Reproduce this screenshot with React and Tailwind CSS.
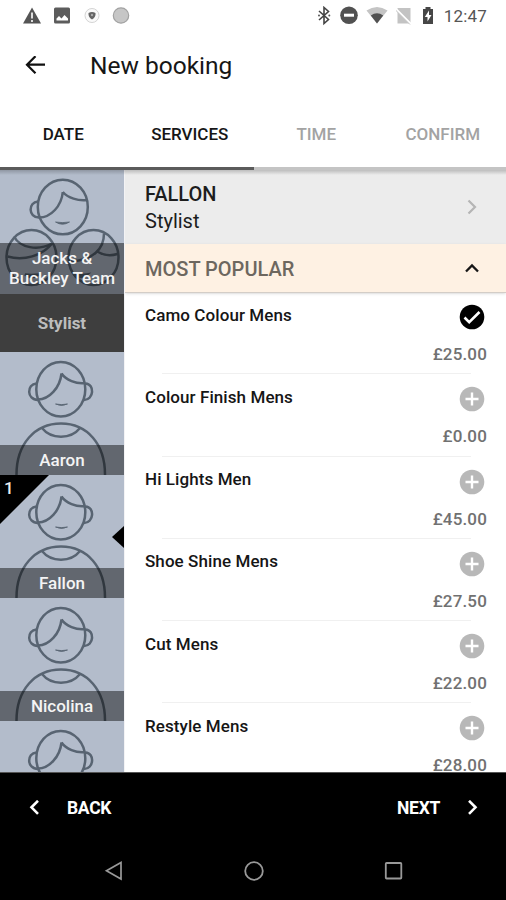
import React, { useState } from 'react';
import clsx from 'clsx';

const tabs = [
  { label: 'DATE', done: true },
  { label: 'SERVICES', done: true },
  { label: 'TIME', done: false },
  { label: 'CONFIRM', done: false }
];

const stylists = ['Aaron', 'Fallon', 'Nicolina', ''];

const services = [
  { name: 'Camo Colour Mens', price: '£25.00' },
  { name: 'Colour Finish Mens', price: '£0.00' },
  { name: 'Hi Lights Men', price: '£45.00' },
  { name: 'Shoe Shine Mens', price: '£27.50' },
  { name: 'Cut Mens', price: '£22.00' },
  { name: 'Restyle Mens', price: '£28.00' }
];

const StatusBar = () => (
  <div className="flex h-8 shrink-0 items-center justify-between pl-[22px] pr-[19px]">
    <div className="flex items-center gap-[11px]">
      <svg className="h-5 w-5" viewBox="0 0 20 20">
        <path d="M10 1.500 19 17.500H1z" fill="#555" />
        <path d="M10 6.500v6M10 14v2" stroke="#ddd" strokeWidth="2" />
      </svg>
      <svg className="h-5 w-5" viewBox="0 0 20 20">
        <rect x="1" y="1.500" width="16" height="16" rx="1.500" fill="#5c5c5c" />
        <path d="m3.500 14.500 0-2 2.500-2.500 2.500 2.500 3-3.500 3.500 3.500v2z" fill="#fff" />
      </svg>
      <svg className="-ml-0.5 h-5 w-5" viewBox="0 0 20 20">
        <circle cx="10" cy="9.500" r="7" fill="#fafafa" stroke="#d4d4d4" strokeWidth="1" />
        <path d="M6.500 7q3.500-2.200 7 0 .5 4-3.500 6.500-4-2.500-3.500-6.500z" fill="#666" />
        <circle cx="10" cy="9" r="1.200" fill="#aaa" />
      </svg>
      <svg className="-ml-0.5 h-5 w-5" viewBox="0 0 20 20">
        <circle cx="10" cy="9.500" r="7.700" fill="#c6c6c6" stroke="#a2a2a2" strokeWidth="1.200" />
      </svg>
    </div>
    <div className="flex items-center">
      <svg className="mr-2 h-5 w-4" viewBox="0 0 16 20" fill="none" stroke="#444" strokeWidth="1.600">
        <path d="m3 5 9.500 8.500L8 17.500V1.500l4.500 4L3 14" />
        <circle cx="3" cy="9.500" r="1" fill="#555" stroke="none" />
        <circle cx="13.300" cy="9.500" r="1" fill="#555" stroke="none" />
      </svg>
      <svg className="mr-2 h-5 w-[18px]" viewBox="0 0 18 20">
        <circle cx="9" cy="9.200" r="8.800" fill="#515151" />
        <rect x="4" y="7.700" width="10" height="3" fill="#fff" />
      </svg>
      <svg className="mr-2 h-5 w-[22px]" viewBox="0 0 22 20">
        <path d="M0.500 4.500Q11-2.500 21.500 4.500L11 17.500z" fill="#c4c4c4" />
        <path d="M4.800 9.500Q11 5 17.200 9.500L11 17.500z" fill="#515151" />
      </svg>
      <svg className="h-5 w-4" viewBox="0 0 16 20">
        <path d="M1.500 2h13v15.500h-13z" fill="#c3c3c3" />
        <path d="M-.5 2.500 15 18" stroke="#fff" strokeWidth="2" />
        <path d="M-.5 4 14 18.500" stroke="#c3c3c3" strokeWidth="1" />
      </svg>
      <svg className="ml-2.5 mr-2.5 h-5 w-3" viewBox="0 0 12 20">
        <path d="M1 3h2.500V1h5v2H11v15H1z" fill="#464646" />
        <path d="M7 4.500 2.800 11H5.500v4.500L9.500 9H7z" fill="#fff" />
      </svg>
      <span className="text-[17px] leading-5 tracking-[0.2px] text-[#555]">12:47</span>
    </div>
  </div>
);

const Avatar = () => (
  <svg className="block h-[123px] w-[124px]" viewBox="0 0 124 123" fill="none" stroke="#586472" strokeWidth="2.500">
    <ellipse cx="60.800" cy="37.200" rx="24.500" ry="27.300" />
    <path d="M61.500 21.500C60 36 49 47.500 38 47.500M61.500 21.500C66 28 76 32 85 31" />
    <path d="M36.500 31.500C26.500 32 26.500 48 38 48M85.500 31.500C95 32 94 48 84 48" />
    <path d="M55.500 52q6 1.200 12 0-6 3-12 0z" fill="#586472" strokeWidth="0.800" />
    <path d="M16.500 124C16 92 35 71.500 61 71.500s44.500 20.500 44 52.500" />
    <path d="M42 76c9 11.500 29 11.500 38 0" />
  </svg>
);

const TeamAvatar = () => (
  <svg className="block h-[124px] w-[124px]" viewBox="0 0 124 124" fill="none" stroke="#586472" strokeWidth="2.500">
    <ellipse cx="62.800" cy="37" rx="25" ry="27.300" />
    <path d="M62.800 22C61.500 36 51 47.500 39 47.500M62.800 22C68 28 78 31 87 30" />
    <path d="M38 31.500C28 32 28 47.500 39 47.500" />
    <path d="M55.500 52q7 1.200 14 0-7 4.500-14 0z" fill="#586472" strokeWidth="0.800" />
    <ellipse cx="31.500" cy="87.500" rx="25" ry="27.500" />
    <path d="M14 66.500C20 78 38 81 52 73.500M7.500 86.500C24 91 42 86 52 73.500" />
    <path d="M25 104.500q6 1 14 0-7 5-14 0z" fill="#586472" />
    <ellipse cx="93.500" cy="87.500" rx="25" ry="27.500" />
    <path d="M104 63.500C104 79 93 90 71 91.500M96.500 81c6 4 14 5 21 3" />
    <path d="M74 104.500q7 1 13 0-6 5-13 0z" fill="#586472" />
  </svg>
);

const StylistTile = ({ name, active }) => (
  <div className="relative h-[123px] shrink-0 overflow-hidden bg-[#b3bccb]">
    <Avatar />
    <div className="absolute inset-x-0 bottom-0 flex h-[30px] items-center justify-center bg-black/45 pt-[2px] text-[17px] font-medium text-[#f4f4f4]">
      {name}
    </div>
    {active && (
      <>
        <svg className="absolute left-0 top-0 h-[49px] w-[49px]" viewBox="0 0 49 49">
          <path d="M0 0h49L0 49z" />
        </svg>
        <span className="absolute left-[4px] top-[3px] text-[17px] font-medium leading-5 text-[#eee]">1</span>
        <svg className="absolute right-0 top-[51px] h-[22px] w-[12px]" viewBox="0 0 12 22">
          <path d="M12 0v22L0 11z" />
        </svg>
      </>
    )}
  </div>
);

const Sidebar = ({ current }) => (
  <div className="flex w-[124px] shrink-0 flex-col overflow-hidden">
    <div className="relative h-[124px] shrink-0 bg-[#b3bccb]">
      <TeamAvatar />
      <div className="absolute inset-x-0 bottom-0 flex h-[51px] items-center justify-center bg-black/45 pb-px text-center text-[17px] font-medium leading-[20px] text-[#f4f4f4]">
        <span>Jacks &amp;<br />Buckley Team</span>
      </div>
    </div>
    <div className="flex h-[58px] shrink-0 items-center justify-center bg-[#3e3e3e] pt-[2px] text-[17px] font-bold text-[#bdbdbd]">
      Stylist
    </div>
    {stylists.map((name, i) => (
      <StylistTile key={i} name={name} active={name === current} />
    ))}
  </div>
);

const ServiceRow = ({ service, selected, onToggle }) => (
  <div className="flex h-[82.3px] shrink-0 flex-col">
    <div className="flex flex-1 justify-between pl-[21px] pr-[19px]">
      <span className="pt-[11.5px] text-[17px] font-medium leading-[22px] tracking-[0.08px] text-[#161616]">{service.name}</span>
      <div className="flex flex-col items-end">
        <button onClick={onToggle} className="mr-[2px] mt-[12px] block">
          <svg className="block h-[26px] w-[26px]" viewBox="0 0 26 26" fill="none">
            <circle cx="13" cy="13" r="12.300" fill={selected ? '#000' : '#b8b8b8'} />
            {selected
              ? <path d="m5.500 13.500 4.700 4.700L20.500 8" stroke="#fff" strokeWidth="2.600" />
              : <path d="M13 6.500v13M6.500 13h13" stroke="#fff" strokeWidth="2.400" />}
          </svg>
        </button>
        <span className="mt-[13px] text-[17px] font-medium leading-[22px] tracking-[0.15px] text-[#717171]">{service.price}</span>
      </div>
    </div>
    <div className="ml-[38px] mr-[35px] h-px bg-[#f0f0f0]" />
  </div>
);

export default function App() {
  const [selected, setSelected] = useState([0]);

  const toggle = (i) => {
    setSelected(selected.includes(i) ? selected.filter(s => s !== i) : [...selected, i]);
  };

  return (
    <div className="flex h-[900px] w-[506px] flex-col overflow-hidden bg-white font-[Roboto,sans-serif]">
      <StatusBar />

      {/* App bar */}
      <div className="flex h-[68px] shrink-0 items-center pl-[25px]">
        <svg className="h-[20px] w-[20px]" viewBox="0 0 20 20" fill="none" stroke="#111" strokeWidth="2.200">
          <path d="M20 8.700H2M10.500 .2 2 8.700l8.500 8.500" />
        </svg>
        <h1 className="ml-[45px] text-[24.5px] leading-8 text-[#161616]">New booking</h1>
      </div>

      {/* Steps */}
      <div className="flex h-[70px] shrink-0 flex-col">
        <div className="flex flex-1 pt-[2px]">
          {tabs.map(tab => (
            <div
              key={tab.label}
              className={clsx(
                'flex flex-1 items-center justify-center text-[17px] font-medium',
                tab.done ? 'text-[#161616]' : 'text-[#a3a3a3]'
              )}
            >
              {tab.label}
            </div>
          ))}
        </div>
        <div className="h-[3px] bg-[#c4c4c4]">
          <div className="h-full w-[254px] bg-[#5b5b5b]" />
        </div>
      </div>

      {/* Content */}
      <div className="relative flex min-h-0 flex-1">
        <div className="absolute inset-x-0 top-0 z-10 h-[5px] bg-gradient-to-b from-black/20 to-transparent" />
        <Sidebar current="Fallon" />
        <div className="flex min-w-0 flex-1 flex-col overflow-hidden border-l border-[#f3f3f5]">
          <div className="flex h-[74px] shrink-0 items-center justify-between bg-[#ececec] pl-5 pr-[29px]">
            <div className="pt-[2px] text-[20px] leading-[27px] text-[#1d1d1d]">
              <div className="font-medium">FALLON</div>
              <div>Stylist</div>
            </div>
            <svg className="h-4 w-[10px]" viewBox="0 0 10 16" fill="none" stroke="#b5b5b5" strokeWidth="2.200">
              <path d="m1.500 1.500 6.500 6.500-6.500 6.500" />
            </svg>
          </div>
          <div className="flex h-[49px] shrink-0 items-center justify-between border-b border-[#d3cdc7] bg-[#fef1e3] pl-5 pr-[27px] shadow-sm">
            <span className="pt-0.5 text-[20px] font-medium text-[#6d675f]">MOST POPULAR</span>
            <svg className="h-[10px] w-[14px]" viewBox="0 0 14 10" fill="none" stroke="#161616" strokeWidth="2.300">
              <path d="m1 8.500 6-6 6 6" />
            </svg>
          </div>
          <div className="-mt-px -ml-px flex flex-col">
            {services.map((service, i) => (
              <ServiceRow
                key={service.name}
                service={service}
                selected={selected.includes(i)}
                onToggle={() => toggle(i)}
              />
            ))}
          </div>
        </div>
      </div>

      {/* Back / next */}
      <div className="flex h-[71px] shrink-0 items-center justify-between border-t border-[#555] bg-black pl-[28px] pr-[27px] text-[17.5px] font-bold tracking-[-0.3px] text-white">
        <button className="flex items-center gap-[27px]">
          <svg className="h-[16px] w-[12px]" viewBox="0 0 12 16" fill="none" stroke="#fff" strokeWidth="2.600">
            <path d="M10 .8 3.500 7.300l6.500 6.500" />
          </svg>
          BACK
        </button>
        <button className="flex items-center gap-[27px]">
          NEXT
          <svg className="h-[16px] w-[12px]" viewBox="0 0 12 16" fill="none" stroke="#fff" strokeWidth="2.600">
            <path d="M2 .8 8.500 7.300 2 13.800" />
          </svg>
        </button>
      </div>

      {/* System navigation */}
      <div className="flex h-[57px] shrink-0 justify-between bg-black pl-[104px] pr-[102px] pt-[18px]">
        <svg className="h-5 w-5" viewBox="0 0 20 20" fill="none" stroke="#999" strokeWidth="1.700">
          <path d="M17 1.500v16.500L2.500 9.800z" />
        </svg>
        <svg className="h-5 w-5" viewBox="0 0 20 20" fill="none" stroke="#999" strokeWidth="1.800">
          <circle cx="10" cy="10" r="8.800" />
        </svg>
        <svg className="h-5 w-5" viewBox="0 0 20 20" fill="none" stroke="#999" strokeWidth="1.800">
          <rect x="1.800" y="2" width="15.500" height="15.500" rx="0.800" />
        </svg>
      </div>
    </div>
  );
}
